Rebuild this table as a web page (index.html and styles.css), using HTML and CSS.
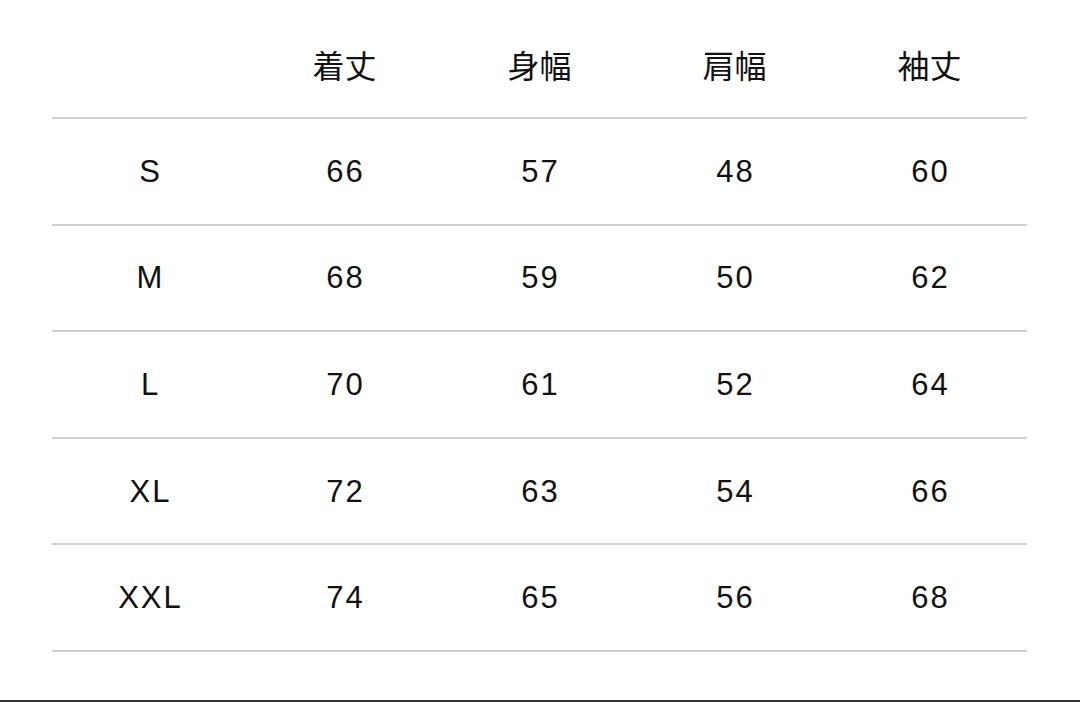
FILE: index.html
```html
<!DOCTYPE html>
<html lang="ja">
<head>
<meta charset="utf-8">
<title>サイズ表</title>
<link rel="stylesheet" href="styles.css">
</head>
<body>
<div class="page">
  <div class="table">
    <div class="row head">
      <div class="cell"></div>
      <div class="cell">着丈</div>
      <div class="cell">身幅</div>
      <div class="cell">肩幅</div>
      <div class="cell">袖丈</div>
    </div>
    <div class="row">
      <div class="cell">S</div><div class="cell">66</div><div class="cell">57</div><div class="cell">48</div><div class="cell">60</div>
    </div>
    <div class="row">
      <div class="cell">M</div><div class="cell">68</div><div class="cell">59</div><div class="cell">50</div><div class="cell">62</div>
    </div>
    <div class="row">
      <div class="cell">L</div><div class="cell">70</div><div class="cell">61</div><div class="cell">52</div><div class="cell">64</div>
    </div>
    <div class="row">
      <div class="cell">XL</div><div class="cell">72</div><div class="cell">63</div><div class="cell">54</div><div class="cell">66</div>
    </div>
    <div class="row">
      <div class="cell">XXL</div><div class="cell">74</div><div class="cell">65</div><div class="cell">56</div><div class="cell">68</div>
    </div>
  </div>
  <div class="spacer"></div>
  <div class="bottom-bar"></div>
</div>
</body>
</html>
```
FILE: styles.css
```css
html, body {
  margin: 0;
  padding: 0;
  background: #ffffff;
}
.page {
  width: 1080px;
  height: 702px;
  display: flex;
  flex-direction: column;
  font-family: "Liberation Sans", "Noto Sans CJK JP", sans-serif;
  color: #111111;
}
.table {
  margin-left: 52px;
  width: 975px;
  display: flex;
  flex-direction: column;
}
.row {
  display: grid;
  grid-template-columns: repeat(5, 1fr);
  height: 104.6px;
  border-bottom: 2px solid #d0d0d0;
  align-items: center;
}
.row.head {
  height: 106px;
  padding-top: 11px;
}
.cell {
  text-align: center;
  font-size: 31px;
  line-height: 1;
  letter-spacing: 2px;
  padding-left: 2px;
}
.head .cell {
  font-size: 32px;
  font-family: "Noto Sans CJK JP", sans-serif;
  letter-spacing: 0;
  padding-left: 0;
}
.spacer {
  flex: 1;
}
.bottom-bar {
  height: 2px;
  background: #333333;
}
```
